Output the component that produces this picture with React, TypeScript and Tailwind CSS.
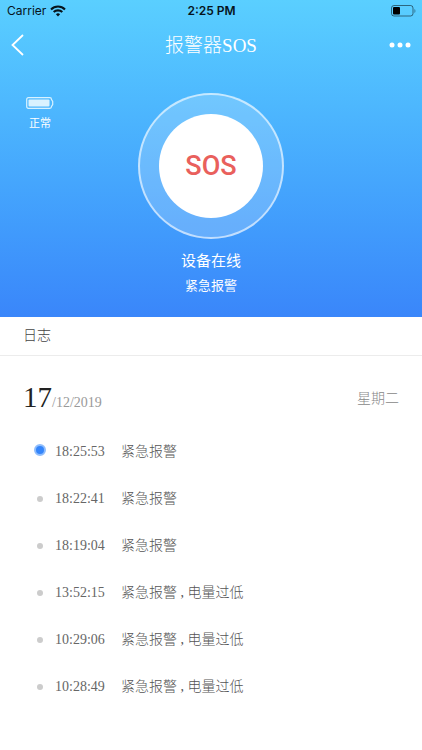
import type React from "react"

interface LogEntry {
  time: string
  text: string
}

const logs: LogEntry[] = [
  { time: "18:25:53", text: "紧急报警" },
  { time: "18:22:41", text: "紧急报警" },
  { time: "18:19:04", text: "紧急报警" },
  { time: "13:52:15", text: "紧急报警 , 电量过低" },
  { time: "10:29:06", text: "紧急报警 , 电量过低" },
  { time: "10:28:49", text: "紧急报警 , 电量过低" },
]

const StatusBar: React.FC = () => (
  <div className="grid h-[22px] grid-cols-3 items-center pl-[7px] pr-[6px] font-['Inter',sans-serif] text-xs font-normal text-[#06141c]">
    <div className="flex items-center gap-1">
      <span>Carrier</span>
      <svg width="16" height="12" viewBox="0 0 16 12" fill="none" stroke="currentColor" strokeWidth="2.1">
        <path d="M1 4.4a10 10 0 0 1 14 0" />
        <path d="M3.7 7.1a6.1 6.1 0 0 1 8.6 0" />
        <path d="M5.9 9.2a3 3 0 0 1 4.2 0L8 11.5z" fill="currentColor" stroke="none" />
      </svg>
    </div>
    <span className="text-center font-semibold">2:25 PM</span>
    <svg className="justify-self-end" width="25" height="12" viewBox="0 0 25 12" fill="none">
      <rect x="0.5" y="0.5" width="21.5" height="10.5" rx="2.5" stroke="#000" strokeOpacity="0.5" />
      <rect x="2" y="2" width="7" height="7.5" rx="1" fill="#000" />
      <path d="M23.5 4v4c1.2-.6 1.2-3.4 0-4z" fill="#000" fillOpacity="0.5" />
    </svg>
  </div>
)

const NavBar: React.FC = () => (
  <div className="flex h-[46px] items-center justify-between px-[11px]">
    <button type="button" aria-label="返回" className="flex w-6 items-center">
      <svg width="13" height="22" viewBox="0 0 13 22" fill="none" stroke="#fff" strokeWidth="1.8">
        <path d="M12 1L1.5 11L12 21" />
      </svg>
    </button>
    <h1 className="pt-[2px] text-[19px] leading-6">报警器SOS</h1>
    <button type="button" aria-label="更多" className="flex w-6 items-center justify-end">
      <svg width="22" height="6" viewBox="0 0 22 6" fill="#fff">
        <circle cx="3" cy="3" r="2.5" />
        <circle cx="11" cy="3" r="2.5" />
        <circle cx="19" cy="3" r="2.5" />
      </svg>
    </button>
  </div>
)

const LogRow: React.FC<{ entry: LogEntry; active: boolean }> = ({ entry, active }) => (
  <li className="flex h-[47px] items-center text-sm text-[#555]">
    <span className="flex w-8 justify-center pl-[2px]">
      {active ? (
        <span className="mb-1 size-3 rounded-full border-2 border-[#8fbdfc] bg-[#3485fb]" />
      ) : (
        <span className="size-[6px] rounded-full bg-[#ccc]" />
      )}
    </span>
    <time className="w-[66px] text-[#666]">{entry.time}</time>
    <span>{entry.text}</span>
  </li>
)

export default function App() {
  return (
    <div className="min-h-screen bg-white font-['Liberation_Serif','Noto_Sans_CJK_SC',serif] font-light">
      <header className="bg-linear-to-b from-[#5acfff] to-[#3a86fa] pb-[21px] text-white">
        <StatusBar />
        <NavBar />
        <div className="grid grid-cols-[1fr_auto_1fr] pt-[25px]">
          <div className="flex flex-col items-start pl-[26px] pt-1">
            <div className="flex flex-col items-center gap-[6px]">
              <svg width="28" height="12" viewBox="0 0 28 12" fill="none">
                <path
                  d="M2.5.7h21.2q1.8 0 1.8 1.8l1.2 2v3l-1.2 2q0 1.8-1.8 1.8H2.5Q.7 11.3.7 9.5V2.5Q.7.7 2.5.7z"
                  stroke="#d9f2ff"
                  strokeWidth="1.2"
                />
                <rect x="2.5" y="2.5" width="21" height="7" rx="1" fill="#d9f2ff" />
              </svg>
              <span className="text-[11px] font-normal leading-4">正常</span>
            </div>
          </div>
          <button
            type="button"
            className="flex size-[146px] items-center justify-center rounded-full border-2 border-white/60 bg-white/20"
          >
            <span className="flex size-[104px] items-center justify-center rounded-full bg-white font-['Roboto',sans-serif] text-[27px] font-medium text-[#e9605c]">
              SOS
            </span>
          </button>
        </div>
        <p className="mt-[10px] text-center text-[15px] font-normal leading-6">设备在线</p>
        <p className="mt-[3px] text-center text-[13px] font-normal leading-5">紧急报警</p>
      </header>

      <main>
        <h2 className="border-b border-[#ececec] px-[23px] py-2 text-sm leading-[22px] text-[#444]">日志</h2>
        <div className="flex items-center justify-between px-[23px] pt-[21px]">
          <p className="pt-1 text-sm leading-9 text-[#999]">
            <span className="text-[29px] leading-8 text-[#222]">17</span>/12/2019
          </p>
          <span className="text-sm text-[#888]">星期二</span>
        </div>
        <ol className="px-[23px] pt-[7px]">
          {logs.map((entry, index) => (
            <LogRow key={entry.time} entry={entry} active={index === 0} />
          ))}
        </ol>
      </main>
    </div>
  )
}
